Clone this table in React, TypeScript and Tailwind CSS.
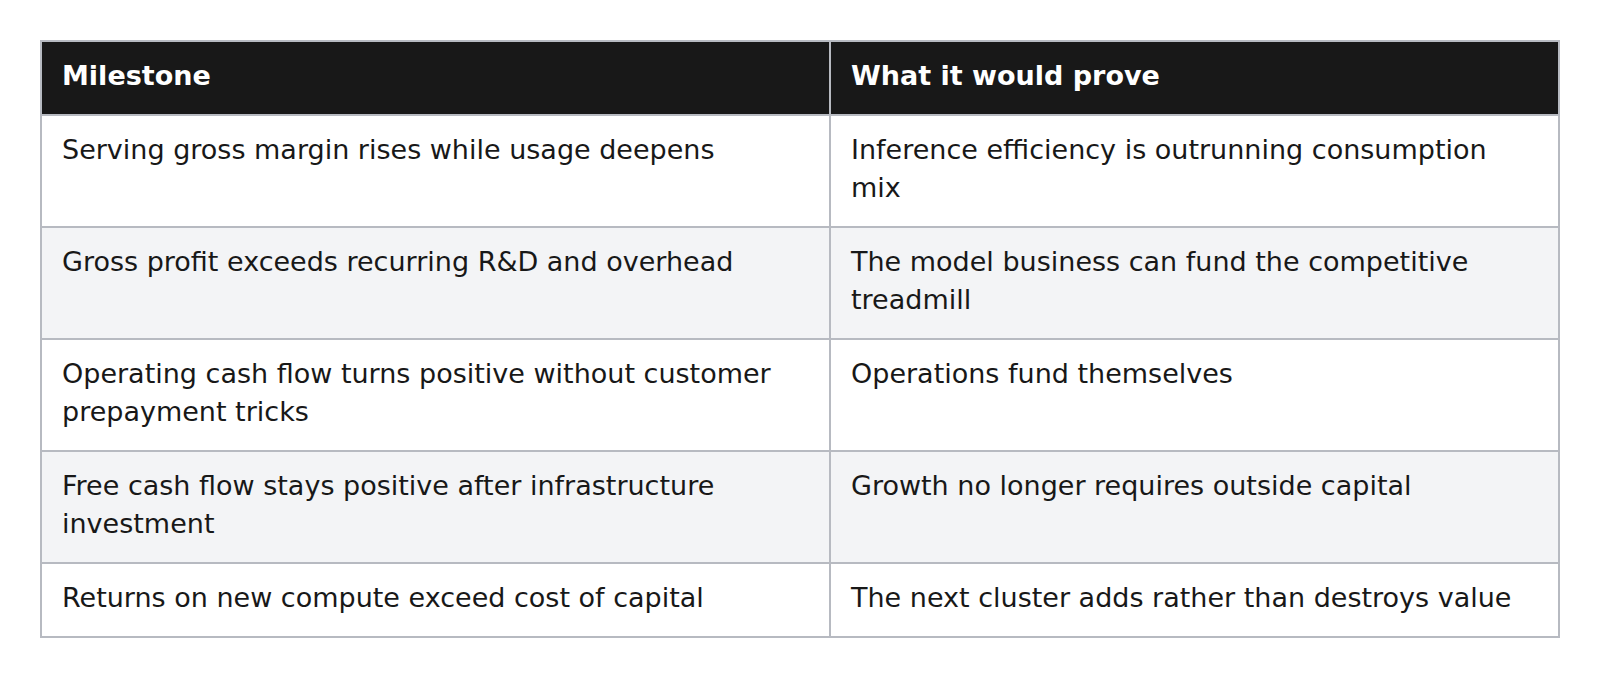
const rows: [string, string][] = [
  ['Serving gross margin rises while usage deepens', 'Inference efficiency is outrunning consumption mix'],
  ['Gross profit exceeds recurring R&D and overhead', 'The model business can fund the competitive treadmill'],
  ['Operating cash flow turns positive without customer prepayment tricks', 'Operations fund themselves'],
  ['Free cash flow stays positive after infrastructure investment', 'Growth no longer requires outside capital'],
  ['Returns on new compute exceed cost of capital', 'The next cluster adds rather than destroys value'],
];

export default function App() {
  return (
    <div className="min-h-screen bg-white p-10 font-['DejaVu_Sans',sans-serif] text-[#181818]">
      <table className="w-full border-collapse text-[27px] leading-[38px]">
        <thead>
          <tr className="bg-[#181818] text-white">
            <th className="w-[789px] border-2 border-[#b7bac1] px-5 pt-[15px] pb-[19px] text-left font-bold">Milestone</th>
            <th className="border-2 border-[#b7bac1] px-5 pt-[15px] pb-[19px] text-left font-bold">What it would prove</th>
          </tr>
        </thead>
        <tbody>
          {rows.map(([a, b], i) => (
            <tr key={i} className={i % 2 === 1 ? 'bg-[#f3f4f6]' : 'bg-white'}>
              <td className="border-2 border-[#b7bac1] px-5 pt-[15px] pb-[19px] align-top">{a}</td>
              <td className="border-2 border-[#b7bac1] px-5 pt-[15px] pb-[19px] align-top">{b}</td>
            </tr>
          ))}
        </tbody>
      </table>
    </div>
  );
}
